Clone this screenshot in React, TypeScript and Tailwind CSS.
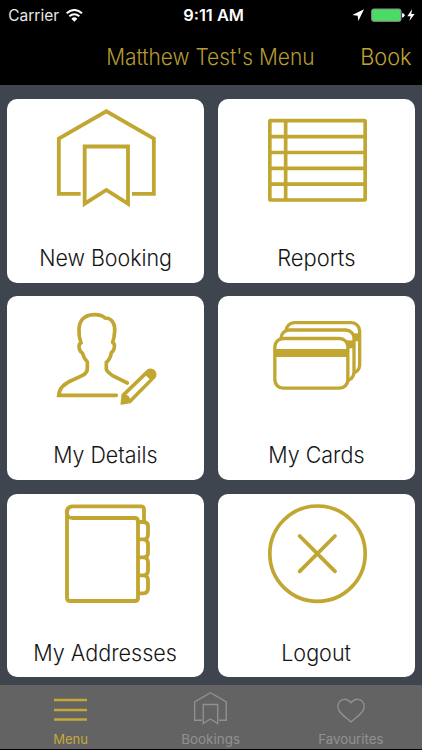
import type { ReactNode } from 'react';

const GOLD = '#c1a732';

type TileProps = { label: string; width: number; viewBox: string; children: ReactNode };

function Label({ text, width, size, y, height, className }: { text: string; width: number; size: number; y: number; height: number; className: string }) {
  return (
    <svg width={width} height={height} className="block overflow-visible" aria-label={text}>
      <text x="-0.8" y={y} fontSize={size} textLength={width + 0.8} lengthAdjust="spacingAndGlyphs" className={className}>
        {text}
      </text>
    </svg>
  );
}

function Tile({ label, width, viewBox, children }: TileProps) {
  return (
    <button className="flex h-[183.6px] flex-col items-center rounded-[10px] bg-white">
      <svg viewBox={viewBox} className="block h-[130px] w-full shrink-0" fill="none" stroke={GOLD} strokeWidth="11.5">
        {children}
      </svg>
      <div className="mt-[9px] pl-[0.5px]">
        <Label text={label} width={width} size={22.4} y={28.2} height={36} className="fill-[#151515] font-['Inter',sans-serif] font-light" />
      </div>
    </button>
  );
}

function BookingShape() {
  return (
    <>
      <path d="M242 311.5H176.500V146L319 64L461.500 146V311.500H396" />
      <path d="M254 169.500H384V341L319 300L254 341Z" />
    </>
  );
}

export default function App() {
  return (
    <div className="flex h-[750px] w-[422px] flex-col overflow-hidden bg-[#3e454f] font-['Inter','Liberation_Sans',sans-serif]">
      <header className="h-[85px] shrink-0 bg-black">
        <div className="grid h-[30px] grid-cols-3 items-center">
          <div className="flex items-center pl-[9px]">
            <Label text="Carrier" width={50} size={15.5} y={15.6} height={20} className="fill-[#e8e8e8] font-['Inter',sans-serif]" />
            <svg viewBox="198 22 51 39" className="ml-[7px] h-[13px] w-[17px]" fill="none" stroke="#fff" strokeWidth="6">
              <path d="M200 35Q223 15 246 35M208 44Q223 31 238 44" />
              <path d="M214 51Q223 43 232 51L223 60Z" fill="#fff" stroke="none" />
            </svg>
          </div>
          <div className="flex justify-center pl-[6px]">
            <Label text="9:11 AM" width={60} size={15.3} y={15.6} height={20} className="fill-white font-['Inter',sans-serif] font-semibold" />
          </div>
          <div className="flex justify-end pr-[7px]">
            <svg viewBox="424 22 189 42" className="h-[14px] w-[63px]">
              <path d="M425 43L460 26L443 61L441 45Z" fill="#fff" />
              <rect x="483" y="25" width="88" height="37" rx="6" fill="#4cd964" stroke="#8c918d" strokeWidth="3" />
              <path d="M574 37Q582 38 582 44T574 51Z" fill="#fff" />
              <path d="M604 26L590 47H600L596 61L612 40H602Z" fill="#fff" />
            </svg>
          </div>
        </div>
        <div className="flex h-[55px] items-start pt-[8px] pl-[107px]">
          <Label text="Matthew Test's Menu" width={207.500} size={22.4} y={26.500} height={36} className="fill-[#b59a31] font-['Inter',sans-serif] font-light" />
          <div className="ml-[46px]">
            <Label text="Book" width={50.500} size={22.6} y={26.500} height={36} className="fill-[#c1a235] font-['Inter',sans-serif] font-[360]" />
          </div>
        </div>
      </header>

      <main className="grid h-[599.500px] shrink-0 grid-cols-[197px_197px] content-start gap-x-[13.700px] gap-y-[13.700px] pt-[14px] pl-[7.200px]">
        <Tile label="New Booking" width={132} viewBox="21 27 591 390">
          <BookingShape />
        </Tile>
        <Tile label="Reports" width={77.500} viewBox="20 27 591 390">
          <rect x="175.500" y="92" width="286" height="238" rx="2" strokeWidth="11" />
          <path strokeWidth="11" d="M223 92V330M176 140H461M176 187.500H461M176 235H461M176 282.500H461" />
        </Tile>
        <Tile label="My Details" width={103.500} viewBox="21 18 591 390">
          <path strokeWidth="11" strokeLinecap="round" d="M349 316H176C178 292 198 278 218 270L246 257Q263 249 262 234V216C256 210 251 203 247 189C240 185 235 174 238 163L243 159C233 130 235 101 248 87C264 70 301 70 315 84C337 84 346 104 344 124Q343 142 338 157L343 163C344 173 341 183 334 188C332 203 326 211 319 217V238C321 245 329 251 338 257L382 279" />
          <path d="M364 342L367 314L440 243A14 14 0 0 1 463 264L391 337Z" fill={GOLD} strokeWidth="5" strokeLinejoin="round" />
          <path d="M378 315L438 257L449 267L390 326Q387 316 378 315Z" fill="#fff" stroke="none" />
        </Tile>
        <Tile label="My Cards" width={95.500} viewBox="20 18 591 390">
          <g fill="#fff" strokeWidth="10">
            <rect x="224" y="98" width="221" height="152" rx="25" />
            <path d="M420 142H445" strokeWidth="24" />
            <rect x="209" y="120" width="219" height="152" rx="25" />
            <path d="M404 163H428" strokeWidth="24" />
            <rect x="190.500" y="145.500" width="219" height="149" rx="25" />
            <path d="M190 189H410" strokeWidth="24" />
          </g>
        </Tile>
        <Tile label="My Addresses" width={143} viewBox="21 26 591 390">
          <path d="M201 85V337Q201 347 211 347H404Q414 347 414 337V108Q414 98 403 98H218C194 98 194 63 218 63H423Q432 63 432 73V108M201 85Q201 63 218 63" />
          <path d="M414 110H430Q444 110 444 124V147Q444 162 432 162H414M432 162Q444 164 444 177V202Q444 215 432 216H414M432 216Q444 218 444 232V255Q444 269 432 270H414M432 270Q444 272 444 286V309Q444 324 430 324H414" />
        </Tile>
        <Tile label="Logout" width={69} viewBox="20 26 591 390">
          <circle cx="318.500" cy="205" r="143" strokeWidth="11" />
          <path d="M265 152L371 258M371 152L265 258" strokeLinecap="round" />
        </Tile>
      </main>

      <nav className="grid h-[64.500px] shrink-0 grid-cols-3 bg-[#636363]">
        <div className="flex flex-col items-center pt-[13px]">
          <svg viewBox="0 0 33 26" className="h-[26px] w-[33px]" stroke="#c4a93a" strokeWidth="2.500">
            <path d="M0 2H33M0 12H33M0 21.500H33" />
          </svg>
          <div className="mt-[5px] pl-[1px]">
            <Label text="Menu" width={34} size={13} y={14.800} height={18} className="fill-[#c4a93a] font-['Inter',sans-serif]" />
          </div>
        </div>
        <div className="flex flex-col items-center pt-[7px]">
          <svg viewBox="171 57 297 297" className="h-[33px] w-[33px]" fill="none" stroke="#919191" strokeWidth="12">
            <BookingShape />
          </svg>
          <div className="mt-[4px]">
            <Label text="Bookings" width={58} size={13} y={14.800} height={18} className="fill-[#919191] font-['Inter',sans-serif]" />
          </div>
        </div>
        <div className="flex flex-col items-center pt-[13px] pr-[1px]">
          <svg viewBox="0 0 28 26" className="h-[26px] w-[28px]" fill="none" stroke="#919191" strokeWidth="1.300">
            <path d="M14 24C11 21 6 18 3 14C-1 9 1 2 7 1.300C10 1 12.500 3 14 4.700C15.500 3 18 1 21 1.300C27 2 29 9 25 14C22 18 17 21 14 24Z" />
          </svg>
          <div className="mt-[5px]">
            <Label text="Favourites" width={64.500} size={13} y={14.800} height={18} className="fill-[#919191] font-['Inter',sans-serif]" />
          </div>
        </div>
      </nav>
      <div className="h-px shrink-0 bg-black" />
    </div>
  );
}
